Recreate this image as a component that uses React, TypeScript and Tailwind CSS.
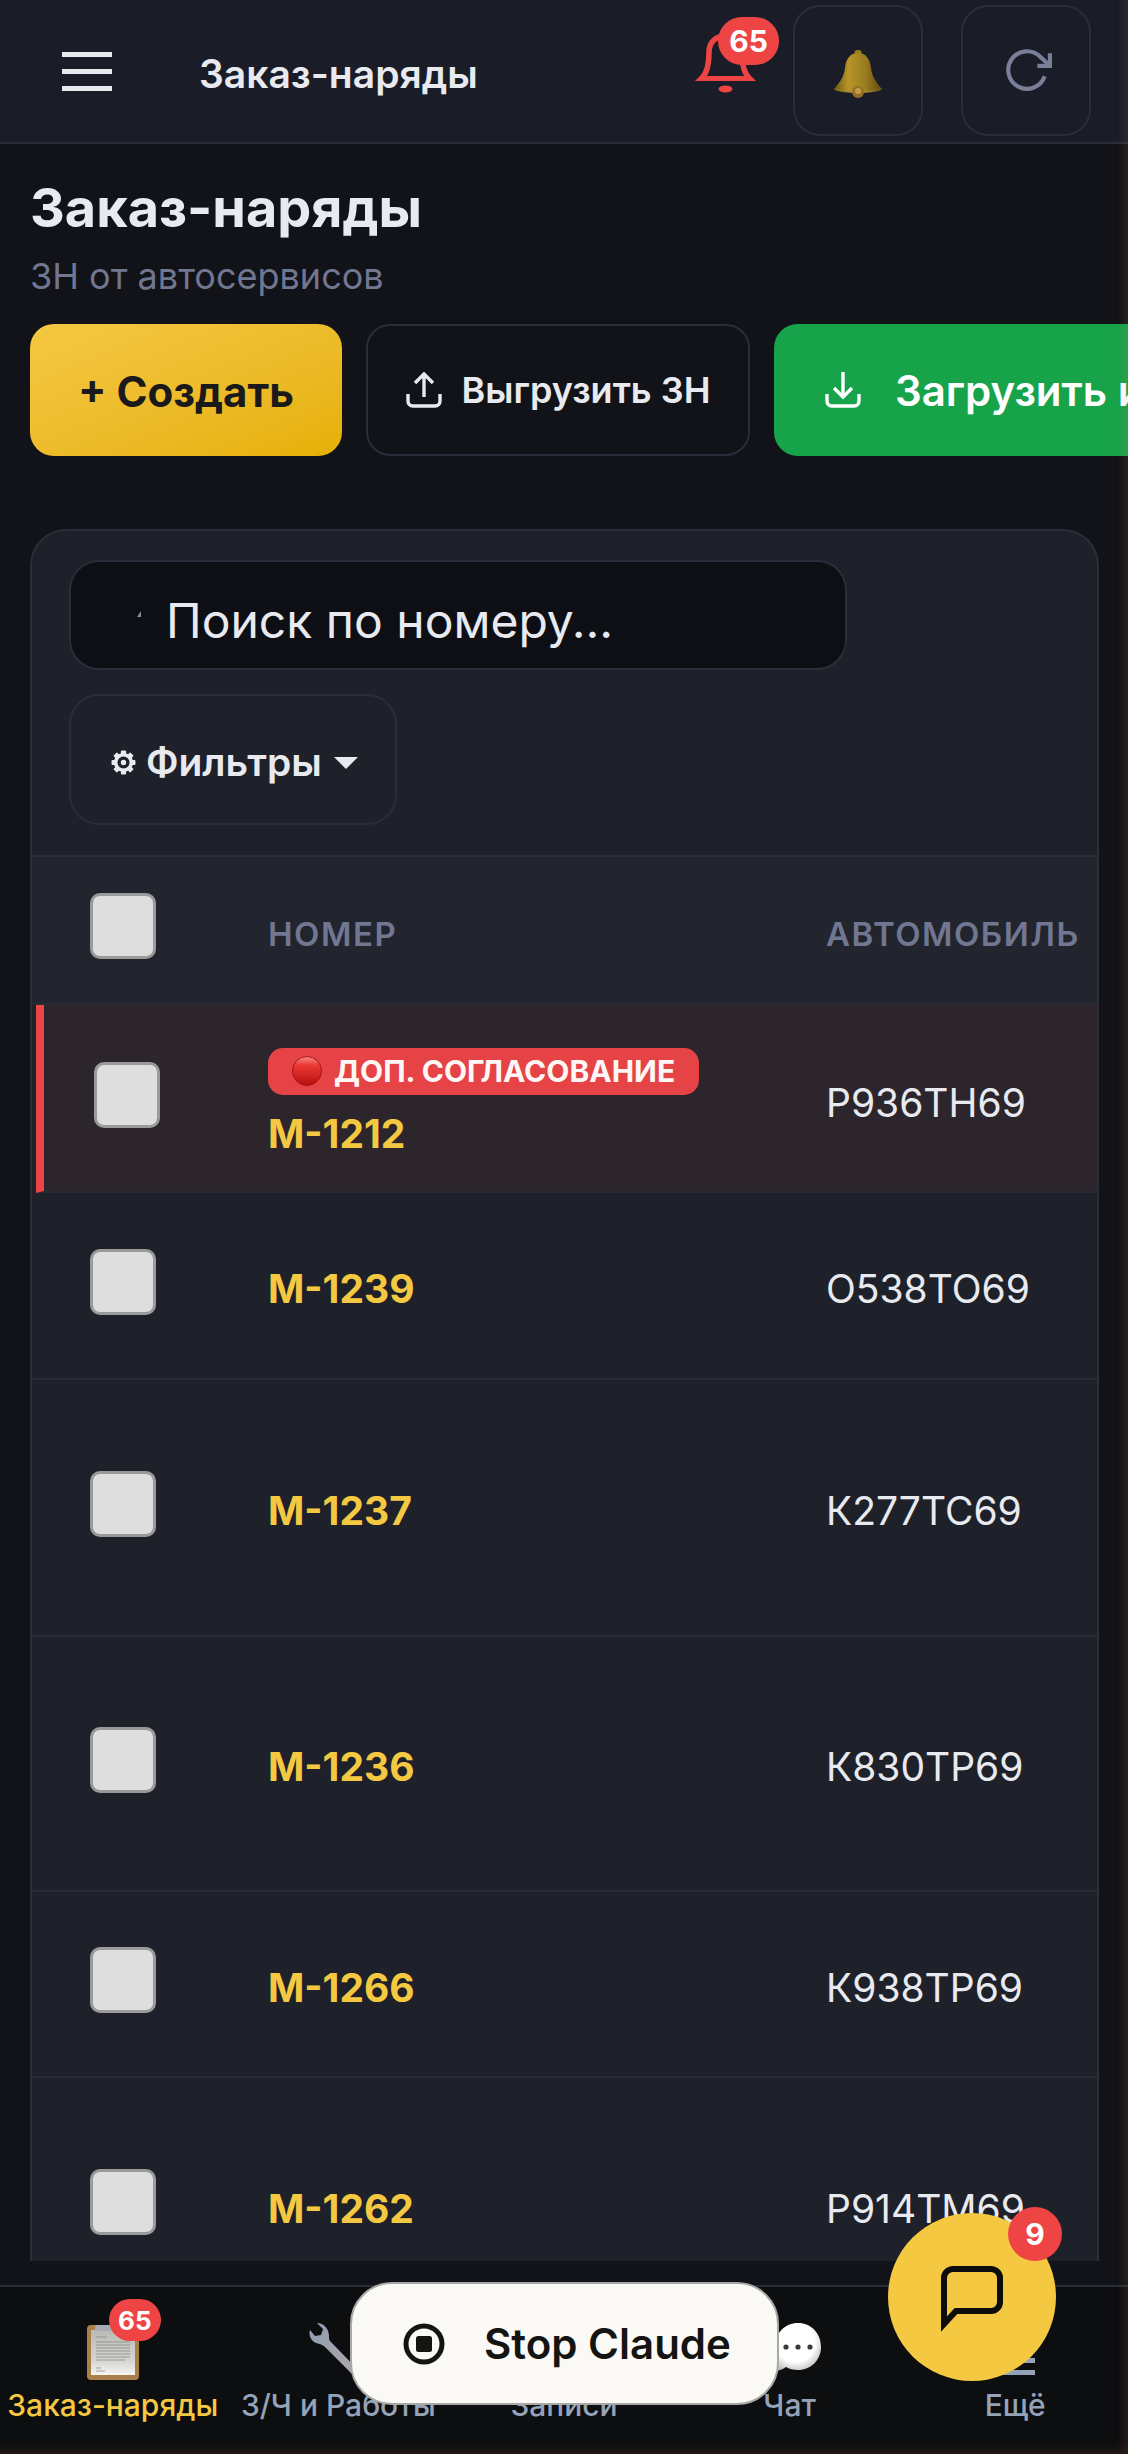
import React from "react";

const font = { fontFamily: "Inter, 'Noto Sans', sans-serif" };

function RedBell() {
  return (
    <svg width="62" height="64" viewBox="0 0 62 64" fill="none">
      <path d="M7 48C13 42 14 32 14 22C14 12 21 6 30.5 6C40 6 47 12 47 22C47 32 48 42 54 48" stroke="#ef4444" strokeWidth="5.5" />
      <path d="M0 51L5 46H56L61 51Z" fill="#ef4444" />
      <ellipse cx="30.5" cy="59" rx="7" ry="3.5" fill="#ef4444" />
    </svg>
  );
}

function GoldBell() {
  return (
    <svg width="48" height="48" viewBox="0 0 48 48">
      <defs>
        <linearGradient id="gb" x1="0" x2="1" y1="0" y2="0">
          <stop offset="0" stopColor="#6d5512" />
          <stop offset="0.3" stopColor="#b8952a" />
          <stop offset="0.65" stopColor="#9a7d1e" />
          <stop offset="1" stopColor="#5e4a10" />
        </linearGradient>
        <linearGradient id="gr" x1="0" x2="1" y1="0" y2="0">
          <stop offset="0" stopColor="#7d651a" />
          <stop offset="0.5" stopColor="#c8a436" />
          <stop offset="1" stopColor="#6a5216" />
        </linearGradient>
      </defs>
      <rect x="20.5" y="0" width="7" height="5" rx="2.5" fill="#9a7d1e" />
      <path d="M24 3C16 3 12 9 11 18C10 27 6 32 0 39C8 43 40 43 48 39C42 32 38 27 37 18C36 9 32 3 24 3Z" fill="url(#gb)" />
      <path d="M0 38C8 42 40 42 48 38L47 40C38 44 10 44 1 40Z" fill="url(#gr)" />
      <circle cx="24" cy="42" r="6" fill="#95702a" />
      <circle cx="24" cy="41" r="3" fill="#c99b45" />
    </svg>
  );
}

function Refresh() {
  return (
    <svg width="50" height="50" viewBox="0 0 24 24" fill="none" stroke="#7a7f99" strokeWidth="2" className="ml-[2px]">
      <polyline points="23 4 23 10 17 10" />
      <path d="M20.49 15a9 9 0 1 1-2.12-9.36L23 10" />
    </svg>
  );
}

function Upload() {
  return (
    <svg width="36" height="36" viewBox="0 0 36 36" fill="none" stroke="#e8eaf0" strokeWidth="3.4">
      <path d="M18 25V2M9 11L18 2L27 11" />
      <path d="M2 22V29C2 32 4 34 7 34H29C32 34 34 32 34 29V22" />
    </svg>
  );
}

function Download() {
  return (
    <svg width="36" height="36" viewBox="0 0 36 36" fill="none" stroke="#ffffff" strokeWidth="3.4">
      <path d="M18 0V25M9 16L18 25L27 16" />
      <path d="M2 22V29C2 32 4 34 7 34H29C32 34 34 32 34 29V22" />
    </svg>
  );
}

function Gear() {
  return (
    <svg width="25" height="25" viewBox="0 0 24 24">
      <g fill="#e8eaf0">
        {[0, 45, 90, 135, 180, 225, 270, 315].map((a) => (
          <rect key={a} x="9.5" y="0.5" width="5" height="5" rx="1" transform={`rotate(${a} 12 12)`} />
        ))}
      </g>
      <circle cx="12" cy="12" r="7.5" fill="none" stroke="#e8eaf0" strokeWidth="3.4" />
      <circle cx="12" cy="12" r="2.6" fill="#e8eaf0" />
    </svg>
  );
}

function RedBall({ size = 30 }: { size?: number }) {
  return (
    <svg width={size} height={size} viewBox="0 0 30 30" className="shrink-0">
      <defs>
        <linearGradient id="rb" x1="0" x2="0" y1="0" y2="1">
          <stop offset="0" stopColor="#f88a85" />
          <stop offset="0.3" stopColor="#ec3a35" />
          <stop offset="1" stopColor="#b80e0e" />
        </linearGradient>
      </defs>
      <circle cx="15" cy="15" r="14.5" fill="url(#rb)" stroke="#a61414" strokeWidth="1" />
    </svg>
  );
}

function Clipboard() {
  return (
    <svg width="52" height="56" viewBox="0 0 52 56">
      <defs>
        <linearGradient id="pp" x1="0" x2="0" y1="0" y2="1">
          <stop offset="0" stopColor="#b9b9b5" />
          <stop offset="0.7" stopColor="#d6d6d2" />
          <stop offset="1" stopColor="#f5f5f3" />
        </linearGradient>
      </defs>
      <rect x="0" y="1" width="52" height="55" rx="4" fill="#a9804a" />
      <rect x="4" y="6" width="44" height="45" fill="url(#pp)" />
      <rect x="8" y="1" width="36" height="6" rx="2" fill="#a9adb3" />
      <g stroke="#85858180" strokeWidth="1.3">
        <path d="M9 13H20M9 18H43M9 21H43M9 24H43M9 27H43M9 30H43M9 33H43M9 36H38M9 44H14M9 47H18" />
      </g>
    </svg>
  );
}

function Wrench() {
  return (
    <svg width="58" height="58" viewBox="0 0 58 58">
      <defs>
        <linearGradient id="wr" x1="0" x2="1" y1="0" y2="1">
          <stop offset="0" stopColor="#8e9db0" />
          <stop offset="1" stopColor="#b7a9ae" />
        </linearGradient>
      </defs>
      <path d="M1 7C-1 13 3 20 11 21C13 22 15 23 16 24L48 56C51 59 56 54 53 51L21 18C20 17 20 15 20 13C20 6 15 0 8 0L14 6L12 12L6 13Z" fill="url(#wr)" />
    </svg>
  );
}

function SpeechBubble() {
  return (
    <svg width="50" height="50" viewBox="0 0 50 50" className="mb-[10px] ml-[14px]">
      <defs>
        <radialGradient id="sb" cx="0.45" cy="0.4" r="0.65">
          <stop offset="0.65" stopColor="#ffffff" />
          <stop offset="1" stopColor="#bdbdbd" />
        </radialGradient>
      </defs>
      <path d="M3 25C3 11 13 1 26 1C39 1 49 11 49 25C49 38 39 48 26 48C21 48 17 47 14 45C10 48 6 49 2 48C5 45 6 42 6 38C4 34 3 30 3 25Z" fill="url(#sb)" />
      <g fill="#3a3a3a">
        <circle cx="14" cy="25" r="2.6" />
        <circle cx="26" cy="25" r="2.6" />
        <circle cx="38" cy="25" r="2.6" />
      </g>
    </svg>
  );
}

function Checkbox({ className = "" }: { className?: string }) {
  return <div className={`h-[66px] w-[66px] shrink-0 rounded-[10px] border-[3px] border-[#9a9a9a] bg-[#dedede] ${className}`} />;
}

function Row({ num, plate, h }: { num: string; plate: string; h: string }) {
  return (
    <div className={`flex shrink-0 border-b-2 border-[#272a34] ${h}`}>
      <div className="flex w-[236px] shrink-0 items-center pb-[8px] pl-[58px]">
        <Checkbox />
      </div>
      <div className="flex w-[558px] shrink-0 items-center pt-[8px] text-[39px] font-bold text-[#f5c842]">{num}</div>
      <div className="flex items-center whitespace-nowrap pt-[8px] text-[39px] text-[#e8eaf0]">{plate}</div>
    </div>
  );
}

function NavItem({ label, active, children }: { label: string; active?: boolean; children: React.ReactNode }) {
  return (
    <div className="flex flex-col items-center">
      <div className="relative flex h-[58px] items-center justify-center">{children}</div>
      <div className={`mt-[4px] whitespace-nowrap text-[30px] leading-[40px] font-medium ${active ? "text-[#f5c842]" : "text-[#94a3b8]"}`}>{label}</div>
    </div>
  );
}

export default function App() {
  return (
    <div className="relative flex h-[2454px] w-[1128px] flex-col overflow-hidden bg-[#111318]" style={font}>
      {/* Top bar */}
      <header className="flex h-[144px] shrink-0 items-center border-b-2 border-[#2a2d3a] bg-[#1a1d27] pl-[62px]">
        <div className="flex w-[50px] flex-col gap-[12px]">
          <div className="h-[5px] bg-[#e8eaf0]" />
          <div className="h-[5px] bg-[#e8eaf0]" />
          <div className="h-[5px] bg-[#e8eaf0]" />
        </div>
        <div className="ml-[87px] mt-[6px] text-[39px] font-semibold text-[#e8eaf0]">Заказ-наряды</div>
        <div className="relative ml-auto mr-[36px] mt-[-18px]">
          <RedBell />
          <div className="absolute left-[23px] top-[-13px] flex h-[48px] w-[61px] items-center justify-center rounded-full bg-[#ef4444] text-[30px] font-bold text-white">65</div>
        </div>
        <div className="mt-[-2px] flex h-[131px] w-[130px] items-center justify-center rounded-[27px] border-2 border-[#2a2d3a] pt-[8px]">
          <GoldBell />
        </div>
        <div className="ml-[38px] mr-[37px] mt-[-2px] flex h-[131px] w-[130px] items-center justify-center rounded-[27px] border-2 border-[#2a2d3a]">
          <Refresh />
        </div>
      </header>

      {/* Main content */}
      <main className="flex min-h-0 flex-1 flex-col pb-[24px] pl-[30px]">
        <h1 className="mt-[30px] text-[54px] leading-[68px] font-bold text-[#e8eaf0]">Заказ-наряды</h1>
        <p className="mt-[11px] text-[36px] leading-[46px] text-[#717691]">ЗН от автосервисов</p>
        <div className="mt-[25px] flex shrink-0 gap-[24px]">
          <button className="flex h-[132px] w-[312px] shrink-0 items-center justify-center rounded-[24px] bg-gradient-to-br from-[#f5c842] to-[#e6b000] pt-[2px] text-[42px] font-bold text-[#1a1a1a]">+ Создать</button>
          <button className="flex h-[132px] w-[384px] shrink-0 items-center justify-center gap-[20px] rounded-[24px] border-2 border-[#2a2d3a] text-[36px] font-semibold text-[#e8eaf0]">
            <Upload />
            Выгрузить ЗН
          </button>
          <button className="flex h-[132px] w-[500px] shrink-0 items-center gap-[34px] rounded-[24px] bg-[#16a34a] pl-[51px] text-[42px] font-semibold whitespace-nowrap text-white">
            <Download />
            Загрузить из 1С
          </button>
        </div>

        {/* Card */}
        <section className="mt-[73px] flex min-h-0 w-[1069px] flex-1 flex-col overflow-hidden rounded-t-[36px] border-x-2 border-t-2 border-[#2a2d3a] bg-[#1e2129]">
          <div className="flex shrink-0 flex-col items-start gap-[24px] border-b-2 border-[#2a2d3a] pb-[30px] pl-[37px] pt-[29px]">
            <div className="flex h-[110px] w-[778px] items-center rounded-[30px] border-2 border-[#2a2d3a] bg-[#0d0f14] pl-[66px] pt-[12px] text-[48px] text-[#e8eaf0]">
              <svg width="4" height="6" viewBox="0 0 4 6" className="mb-[14px] mr-[25px]">
                <path d="M0 6L4 0V6Z" fill="#8a8d99" />
              </svg>
              Поиск по номеру...
            </div>
            <div className="flex h-[131px] w-[328px] items-center rounded-[30px] border-2 border-[#2a2d3a] pl-[40px] pt-[6px] text-[39px] font-semibold text-[#e8eaf0]">
              <Gear />
              <span className="ml-[10px]">Фильтры</span>
              <span className="ml-[12px] h-0 w-0 border-x-[12px] border-t-[12px] border-x-transparent border-t-[#e8eaf0]" />
            </div>
          </div>

          <div className="flex h-[148px] shrink-0 border-b-2 border-[#272a34] bg-[#22252e]">
            <div className="flex w-[236px] shrink-0 items-start pl-[58px] pt-[36px]">
              <Checkbox />
            </div>
            <div className="flex w-[558px] shrink-0 items-center pt-[10px] text-[33px] font-semibold tracking-[1.5px] text-[#717691]">НОМЕР</div>
            <div className="flex items-center whitespace-nowrap pt-[10px] text-[33px] font-semibold tracking-[1.5px] text-[#717691]">АВТОМОБИЛЬ</div>
          </div>

          <div className="ml-[4px] flex h-[188px] shrink-0 border-b-2 border-l-[8px] border-b-[#272a34] border-l-[#ef4444] bg-[#2c252c]">
            <div className="flex w-[224px] shrink-0 items-center pb-[6px] pl-[50px]">
              <Checkbox />
            </div>
            <div className="flex w-[558px] shrink-0 flex-col justify-center pt-[10px]">
              <div className="flex h-[47px] w-[431px] items-center rounded-[15px] bg-[#e54346] pl-[24px] text-[30px] font-bold whitespace-nowrap text-[#fff6f6]">
                <RedBall />
                <span className="ml-[12px]">ДОП. СОГЛАСОВАНИЕ</span>
              </div>
              <div className="mt-[14px] text-[39px] leading-[50px] font-bold text-[#f5c842]">М-1212</div>
            </div>
            <div className="flex items-center whitespace-nowrap pt-[10px] text-[39px] text-[#e8eaf0]">Р936ТН69</div>
          </div>

          <Row num="М-1239" plate="О538ТО69" h="h-[187px]" />
          <Row num="М-1237" plate="К277ТС69" h="h-[257px]" />
          <Row num="М-1236" plate="К830ТР69" h="h-[255px]" />
          <Row num="М-1266" plate="К938ТР69" h="h-[186px]" />
          <Row num="М-1262" plate="Р914ТМ69" h="h-[257px]" />
        </section>
      </main>

      {/* Bottom nav */}
      <nav className="grid h-[169px] shrink-0 grid-cols-5 border-t-2 border-[#2a2d3a] bg-[#0d0e10] pt-[36px]">
        <NavItem label="Заказ-наряды" active>
          <Clipboard />
          <div className="absolute left-[22px] top-[-24px] flex h-[42px] w-[52px] items-center justify-center rounded-full bg-[#ef4444] text-[26px] font-bold text-white">65</div>
        </NavItem>
        <NavItem label="З/Ч и Работы">
          <Wrench />
        </NavItem>
        <NavItem label="Записи">
          <div className="h-[50px] w-[50px] rounded-[6px] bg-[#c8c8c8]" />
        </NavItem>
        <NavItem label="Чат">
          <SpeechBubble />
        </NavItem>
        <NavItem label="Ещё">
          <div className="mt-[16px] flex w-[40px] flex-col gap-[7px]">
            <div className="h-[5px] bg-[#94a3b8]" />
            <div className="h-[5px] bg-[#94a3b8]" />
            <div className="h-[5px] bg-[#94a3b8]" />
          </div>
        </NavItem>
      </nav>

      {/* Floating chat button */}
      <div className="absolute left-[888px] top-[2213px] flex h-[168px] w-[168px] items-center justify-center rounded-full bg-[#f5c842]">
        <svg width="62" height="66" viewBox="0 0 62 66" fill="none" className="mt-[4px]">
          <path d="M3 58V12C3 7 7 3 12 3H50C55 3 59 7 59 12V36C59 41 55 45 50 45H15Z" stroke="#0d0d0d" strokeWidth="6" />
        </svg>
        <div className="absolute left-[120px] top-[-6px] flex h-[54px] w-[54px] items-center justify-center rounded-full bg-[#ef4444] text-[30px] font-bold text-white">9</div>
      </div>

      {/* Stop pill */}
      <div className="absolute left-[350px] top-[2282px] flex h-[123px] w-[429px] items-center rounded-[42px] border-2 border-[#a8a8a4] bg-[#faf9f5] pl-[51px]">
        <svg width="42" height="42" viewBox="0 0 42 42" fill="none">
          <circle cx="21" cy="21" r="18" stroke="#141413" strokeWidth="5" />
          <rect x="13" y="13" width="16" height="16" rx="2.5" fill="#141413" />
        </svg>
        <span className="ml-[39px] text-[42px] font-semibold whitespace-nowrap text-[#141413]">Stop Claude</span>
      </div>

      {/* Edge tint */}
      <div className="pointer-events-none absolute inset-0 shadow-[inset_-8px_-8px_10px_-4px_rgba(217,119,87,0.14)]" />
    </div>
  );
}
